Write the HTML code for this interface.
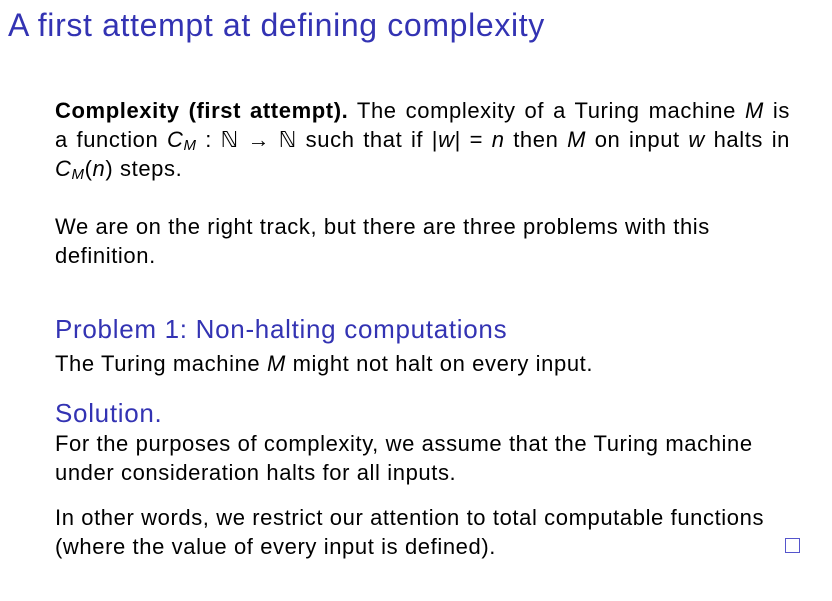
<!DOCTYPE html>
<html><head><meta charset="utf-8"><style>
html,body{margin:0;padding:0;background:#fff;}
body{width:832px;height:601px;position:relative;overflow:hidden;font-family:"Liberation Sans","DejaVu Sans",sans-serif;color:#000;}
.l{position:absolute;left:55px;white-space:nowrap;font-size:22px;line-height:28px;letter-spacing:0.6px;}
.j{width:735px;text-align:justify;text-align-last:justify;white-space:normal;height:28px;overflow:hidden;}
.t{position:absolute;left:8px;top:5px;font-size:32px;color:#3333b3;white-space:nowrap;line-height:40px;letter-spacing:0.65px;}
.h{color:#3333b3;font-size:26px;letter-spacing:0.7px;}
i{font-family:"Liberation Sans",sans-serif;}
.box{position:absolute;left:785px;top:538px;width:13px;height:13px;border:1.5px solid #5555cc;}
sub{font-size:15px;vertical-align:-3px;line-height:0}
</style></head><body>
<div class="t">A first attempt at defining complexity</div>
<div class="l j" style="top:97px"><b>Complexity (first attempt).</b> The complexity of a Turing machine <i>M</i> is</div>
<div class="l j" style="top:126px">a function <i>C<sub>M</sub></i> : ℕ → ℕ such that if |<i>w</i>| = <i>n</i> then <i>M</i> on input <i>w</i> halts in</div>
<div class="l" style="top:155px"><i>C<sub>M</sub></i>(<i>n</i>) steps.</div>
<div class="l" style="top:213px">We are on the right track, but there are three problems with this</div>
<div class="l" style="top:242px">definition.</div>
<div class="l h" style="top:315px">Problem 1: Non-halting computations</div>
<div class="l" style="top:350px">The Turing machine <i>M</i> might not halt on every input.</div>
<div class="l h" style="top:399px">Solution.</div>
<div class="l" style="top:430px">For the purposes of complexity, we assume that the Turing machine</div>
<div class="l" style="top:459px">under consideration halts for all inputs.</div>
<div class="l" style="top:504px">In other words, we restrict our attention to total computable functions</div>
<div class="l" style="top:533px">(where the value of every input is defined).</div>
<div class="box"></div>
</body></html>
